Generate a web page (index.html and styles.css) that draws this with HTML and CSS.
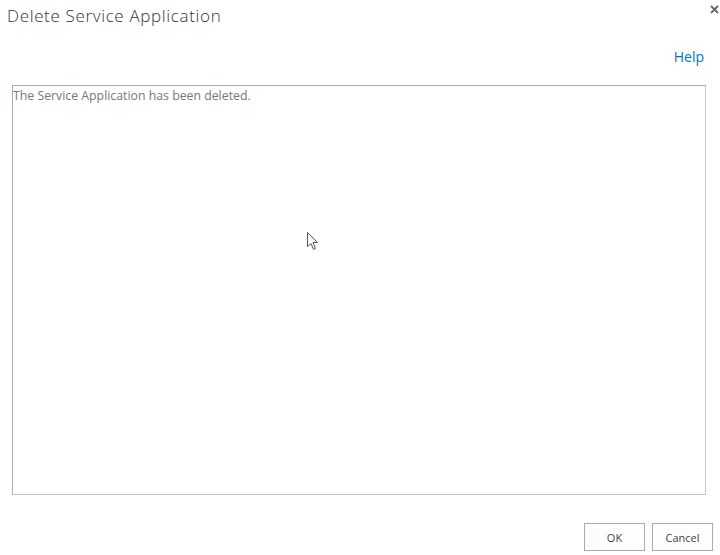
FILE: index.html
```html
<!DOCTYPE html>
<html>
<head>
<meta charset="utf-8">
<link rel="stylesheet" href="styles.css">
</head>
<body>
<div class="dialog">
  <div class="titlebar">
    <h1 class="title">Delete Service Application</h1>
    <svg class="close" width="9" height="9" viewBox="0 0 9 9">
      <path d="M1 1 L8 8 M8 1 L1 8" stroke="#666" stroke-width="1.8"/>
    </svg>
  </div>
  <div class="helprow"><a class="help">Help</a></div>
  <div class="content">
    <div class="msg">The Service Application has been deleted.</div>
  </div>
  <div class="buttons">
    <button class="btn">OK</button>
    <button class="btn">Cancel</button>
  </div>
  <svg class="cursor" width="14" height="20" viewBox="0 0 14 20">
    <path d="M1.5 1.5 L1.5 15.5 L5 12.5 L7.5 18.5 L9.5 17.5 L7 11.5 L11.5 11.5 Z" fill="#fff" stroke="#555" stroke-width="1" stroke-linejoin="miter"/>
  </svg>
</div>
</body>
</html>
```
FILE: styles.css
```css
html, body {
  margin: 0;
  padding: 0;
  background: #fff;
}
body {
  font-family: "Open Sans", "Noto Sans", sans-serif;
  width: 720px;
  height: 555px;
  overflow: hidden;
}
.dialog {
  position: relative;
  width: 720px;
  height: 555px;
  display: flex;
  flex-direction: column;
}
.titlebar {
  display: flex;
  justify-content: space-between;
  align-items: flex-start;
  height: 40px;
}
.title {
  margin: 4px 0 0 7px;
  font-size: 17px;
  font-weight: 300;
  color: #333;
  letter-spacing: 0.65px;
}
.close {
  margin: 5px 1px 0 0;
}
.helprow {
  display: flex;
  justify-content: flex-end;
  padding-right: 16px;
  height: 45px;
}
.help {
  font-size: 14px;
  color: #0072c6;
  margin-top: 7px;
}
.content {
  margin-left: 12px;
  width: 692px;
  height: 408px;
  border: 1px solid #ababab;
  border-right-color: #c6c6c6;
  border-bottom-color: #c6c6c6;
}
.msg {
  font-size: 12.3px;
  color: #777;
  padding: 2px 0 0 0;
  line-height: 16px;
}
.buttons {
  display: flex;
  justify-content: flex-end;
  gap: 7px;
  margin-top: 28px;
  padding-right: 7px;
}
.btn {
  width: 61px;
  height: 28px;
  background: #fdfdfd;
  border: 1px solid #ababab;
  font-family: "Open Sans", sans-serif;
  font-size: 11px;
  color: #444;
  padding: 0;
}
.cursor {
  position: absolute;
  left: 306px;
  top: 231px;
}
```
